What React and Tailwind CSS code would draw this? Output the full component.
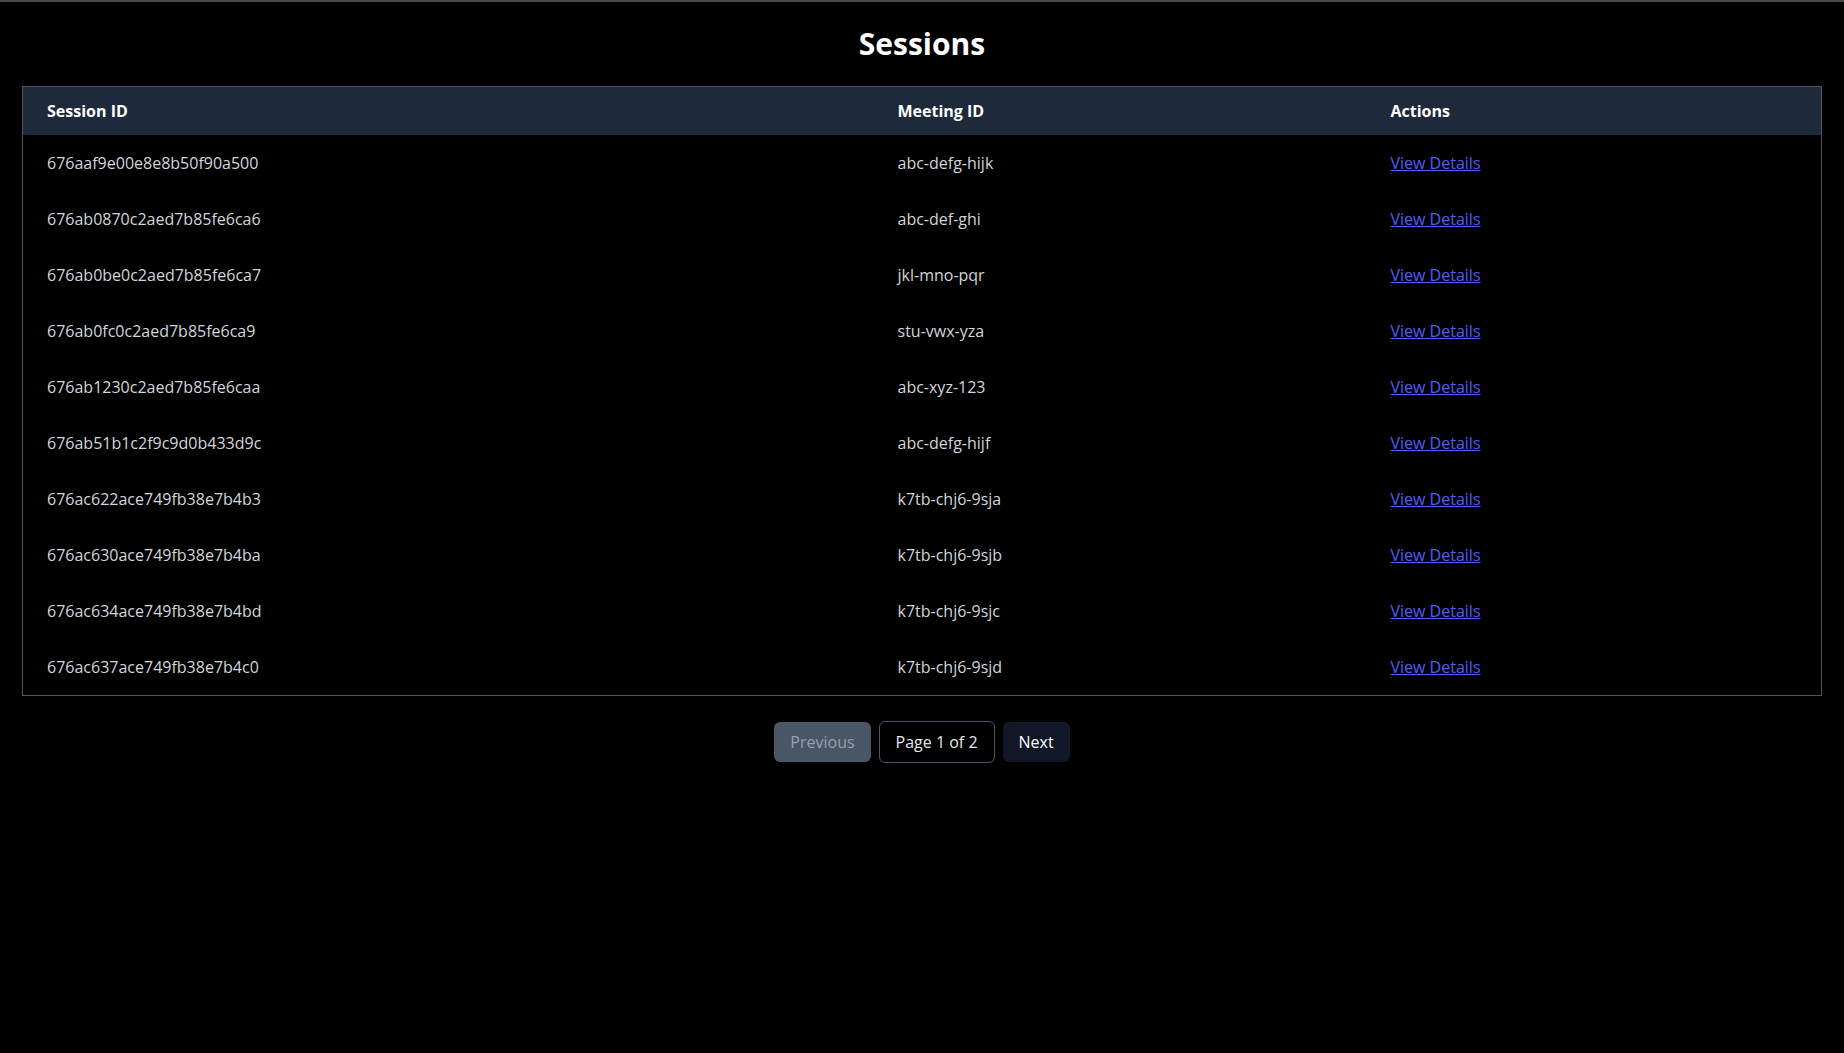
const sessions = [
  { id: "676aaf9e00e8e8b50f90a500", meetingId: "abc-defg-hijk" },
  { id: "676ab0870c2aed7b85fe6ca6", meetingId: "abc-def-ghi" },
  { id: "676ab0be0c2aed7b85fe6ca7", meetingId: "jkl-mno-pqr" },
  { id: "676ab0fc0c2aed7b85fe6ca9", meetingId: "stu-vwx-yza" },
  { id: "676ab1230c2aed7b85fe6caa", meetingId: "abc-xyz-123" },
  { id: "676ab51b1c2f9c9d0b433d9c", meetingId: "abc-defg-hijf" },
  { id: "676ac622ace749fb38e7b4b3", meetingId: "k7tb-chj6-9sja" },
  { id: "676ac630ace749fb38e7b4ba", meetingId: "k7tb-chj6-9sjb" },
  { id: "676ac634ace749fb38e7b4bd", meetingId: "k7tb-chj6-9sjc" },
  { id: "676ac637ace749fb38e7b4c0", meetingId: "k7tb-chj6-9sjd" },
];

export default function App() {
  return (
    <div className="min-h-screen bg-black border-t-2 border-[#4a4a4a] px-[22px] pt-6 font-['Open_Sans',sans-serif]">
      <h1 className="text-3xl font-bold text-center text-white mb-6">Sessions</h1>

      <table className="w-full border-collapse border border-gray-600 text-left">
        <thead className="bg-gray-800 text-white">
          <tr>
            <th className="w-[851px] px-6 py-3 font-bold">Session ID</th>
            <th className="w-[493px] px-6 py-3 font-bold">Meeting ID</th>
            <th className="px-6 py-3 font-bold">Actions</th>
          </tr>
        </thead>
        <tbody>
          {sessions.map((session) => (
            <tr key={session.id} className="text-gray-300">
              <td className="px-6 py-4">{session.id}</td>
              <td className="px-6 py-4">{session.meetingId}</td>
              <td className="px-6 py-4">
                <a href="#" className="text-[#4d5ff5] underline">
                  View Details
                </a>
              </td>
            </tr>
          ))}
        </tbody>
      </table>

      <div className="flex items-center justify-center gap-2 mt-[25px]">
        <button disabled className="px-4 py-2 rounded-md bg-gray-600 text-gray-400">
          Previous
        </button>
        <span className="px-4 py-2 rounded-md border border-gray-600 text-gray-200">
          Page 1 of 2
        </span>
        <button className="px-4 py-2 rounded-md bg-gray-900 text-white">Next</button>
      </div>
    </div>
  );
}
